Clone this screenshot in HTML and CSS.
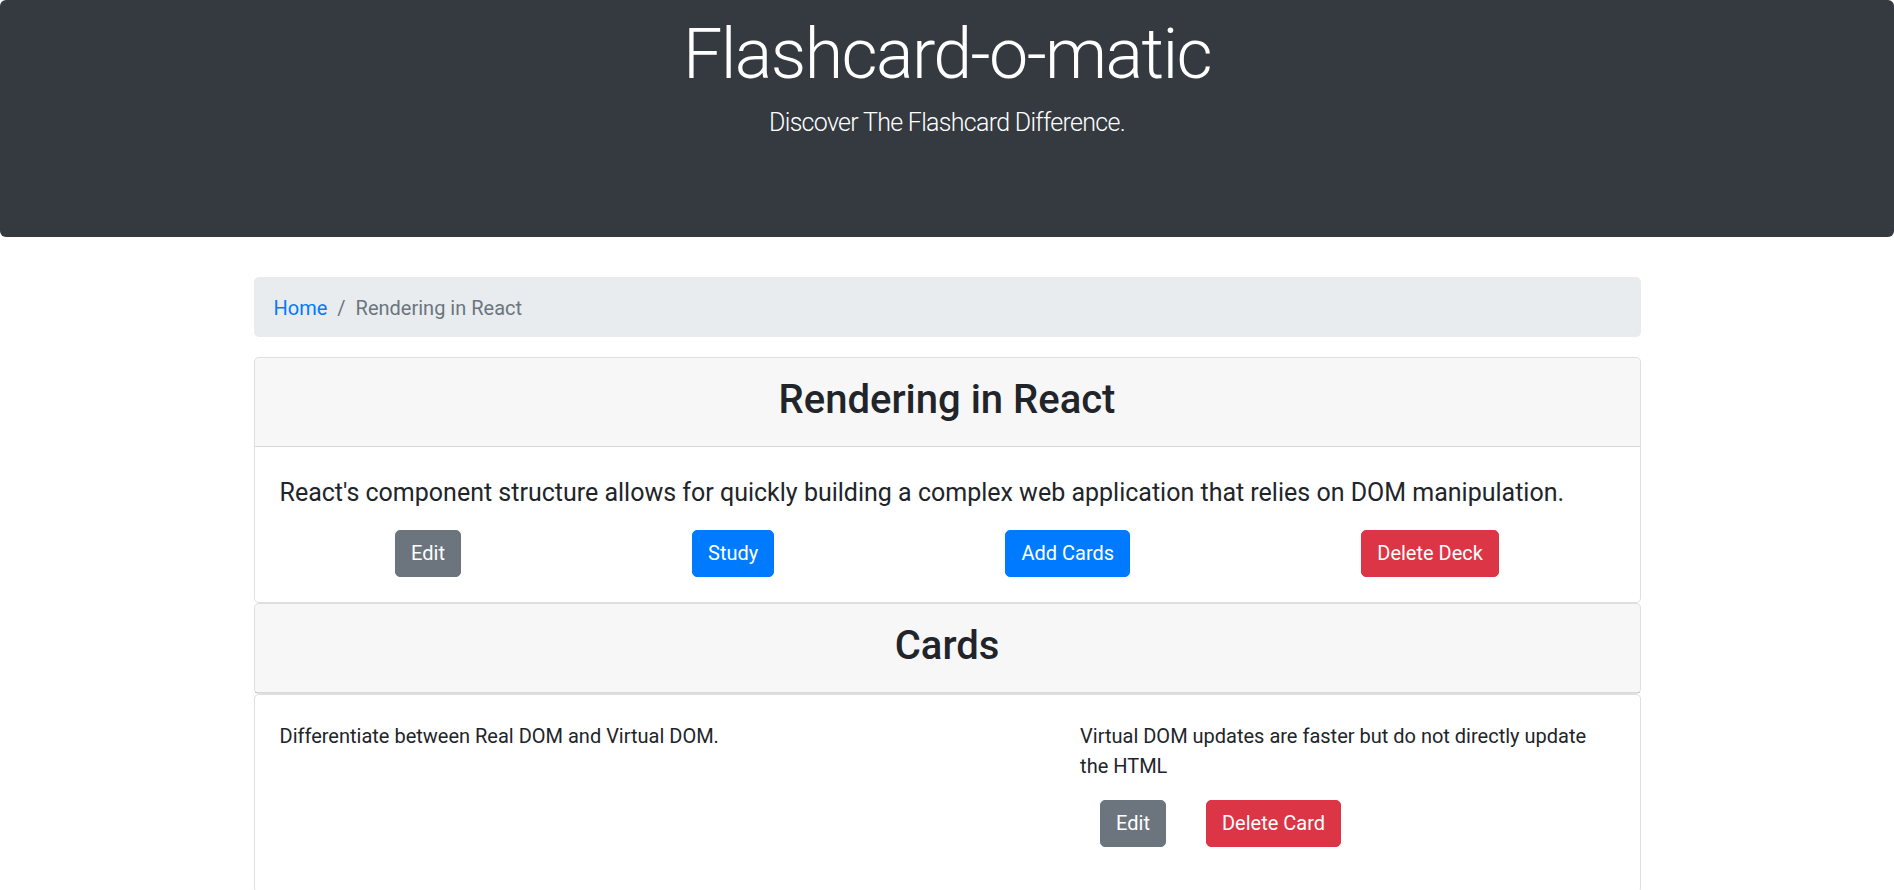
FILE: index.html
```html
<!DOCTYPE html>
<html lang="en">
<head>
<meta charset="utf-8">
<title>Flashcard-o-matic</title>
<link rel="stylesheet" href="styles.css">
</head>
<body>
<header class="jumbotron">
  <h1 class="display-title">Flashcard-o-matic</h1>
  <p class="lead">Discover The Flashcard Difference.</p>
</header>
<main class="container">
  <nav class="breadcrumb">
    <a class="crumb-link" href="#">Home</a>
    <span class="crumb-sep">/</span>
    <span class="crumb-active">Rendering in React</span>
  </nav>

  <section class="card">
    <div class="card-header">
      <h2 class="card-title">Rendering in React</h2>
    </div>
    <div class="card-body">
      <p class="deck-desc">React's component structure allows for quickly building a complex web application that relies on DOM manipulation.</p>
      <div class="deck-actions">
        <button class="btn btn-secondary">Edit</button>
        <button class="btn btn-primary">Study</button>
        <button class="btn btn-primary">Add Cards</button>
        <button class="btn btn-danger">Delete Deck</button>
      </div>
    </div>
  </section>

  <section class="card">
    <div class="card-header">
      <h2 class="card-title">Cards</h2>
    </div>
  </section>

  <section class="card">
    <div class="card-body">
      <div class="row">
        <div class="col-7">
          <p class="card-text">Differentiate between Real DOM and Virtual DOM.</p>
        </div>
        <div class="col-5">
          <p class="card-text">Virtual DOM updates are faster but do not directly update the HTML</p>
          <div class="card-actions">
            <button class="btn btn-secondary">Edit</button>
            <button class="btn btn-danger">Delete Card</button>
          </div>
        </div>
      </div>
    </div>
  </section>
</main>
</body>
</html>
```

FILE: styles.css
```css
* { box-sizing: border-box; }

html, body {
  margin: 0;
  padding: 0;
}

body {
  font-family: Roboto, "Liberation Sans", sans-serif;
  font-size: 20px;
  line-height: 1.5;
  color: #212529;
  background: #fff;
}

.jumbotron {
  background: #343a40;
  color: #fff;
  text-align: center;
  height: 237px;
  padding-top: 12px;
  border-radius: 6px;
  margin-bottom: 40px;
}

.display-title {
  margin: 0;
  font-size: 70px;
  font-weight: 300;
  line-height: 84px;
  letter-spacing: -1.6px;
}

.lead {
  margin: 8px 0 0;
  font-size: 25px;
  font-weight: 300;
  line-height: 37.5px;
  letter-spacing: -0.7px;
}

.container {
  width: 1387px;
  margin: 0 auto;
}

.breadcrumb {
  display: flex;
  background: #e9ecef;
  border-radius: 5px;
  padding: 16px 20px 14px;
  margin-bottom: 20px;
  line-height: 30px;
}

.crumb-link {
  color: #007bff;
  text-decoration: none;
}

.crumb-sep {
  color: #6c757d;
  padding: 0 10px;
}

.crumb-active {
  color: #6c757d;
}

.card {
  border: 1px solid rgba(0, 0, 0, 0.125);
  border-radius: 5px;
  background: #fff;
}

.card-header {
  background: rgba(0, 0, 0, 0.03);
  border-bottom: 1px solid rgba(0, 0, 0, 0.125);
  padding: 15px 25px;
  border-radius: 4px 4px 0 0;
}

.card-title {
  margin: 0;
  padding: 3px 0 7px;
  font-size: 40px;
  line-height: 48px;
  font-weight: 500;
  text-align: center;
}

.card-body {
  padding: 25px;
}

.deck-desc {
  margin: 0 0 18px;
  padding-top: 2px;
  font-size: 25px;
  line-height: 37.5px;
}

.deck-actions {
  display: flex;
  justify-content: space-around;
}

.btn {
  font-family: inherit;
  font-size: 20px;
  line-height: 30px;
  padding: 7.5px 15px;
  border: 1px solid transparent;
  border-radius: 5px;
  color: #fff;
  cursor: pointer;
}

.btn-secondary { background: #6c757d; border-color: #6c757d; }
.btn-primary { background: #007bff; border-color: #007bff; }
.btn-danger { background: #dc3545; border-color: #dc3545; }

.row {
  display: flex;
  margin: 0 -18.75px;
}

.col-7 {
  flex: 0 0 58.3333%;
  padding: 0 18.75px;
}

.col-5 {
  flex: 0 0 41.6667%;
  padding: 0 18.75px;
}

.card-text {
  margin: 0 0 19px;
  padding-top: 1px;
}

.card-actions {
  display: flex;
  margin-bottom: 20px;
}

.card-actions .btn {
  margin: 0 20px;
}
```
